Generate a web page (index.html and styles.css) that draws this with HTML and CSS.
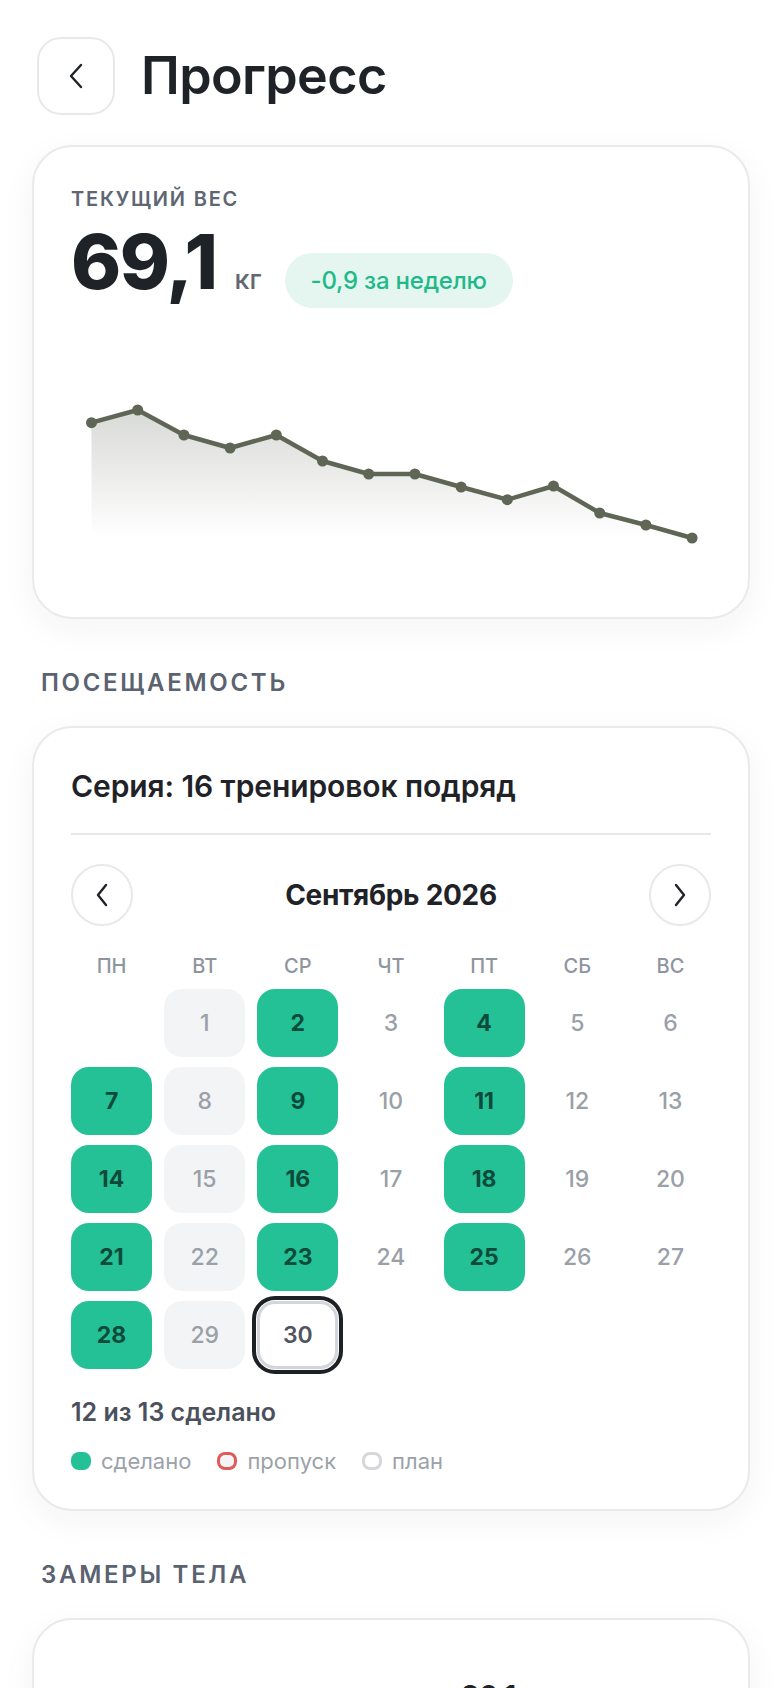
FILE: index.html
```html
<!DOCTYPE html>
<html lang="ru">
  <head>
    <meta charset="UTF-8" />
    <meta name="viewport" content="width=device-width, initial-scale=1.0" />
    <title>Прогресс</title>
    <link rel="stylesheet" href="styles.css">
  </head>
  <body>
    <div class="page">
      <header class="top-bar">
        <button class="back-btn" aria-label="Назад">
          <svg width="16" height="26" viewBox="0 0 16 26"><path d="M13 2 L3 13 L13 24" fill="none" stroke="#1f2328" stroke-width="2.4" stroke-linecap="round" stroke-linejoin="round"/></svg>
        </button>
        <h1 class="page-title">Прогресс</h1>
      </header>

      <!-- weight card -->
      <section class="card weight-card">
        <p class="card-label">Текущий вес</p>
        <div class="weight-row">
          <span class="weight-value">69,1</span>
          <span class="weight-unit">кг</span>
          <span class="weight-badge">-0,9 за неделю</span>
        </div>
        <svg class="weight-chart" width="640" height="240" viewBox="0 0 640 240">
          <defs>
            <linearGradient id="chartFill" x1="0" y1="0" x2="0" y2="1">
              <stop offset="0" stop-color="#5f6656" stop-opacity="0.24" />
              <stop offset="1" stop-color="#5f6656" stop-opacity="0" />
            </linearGradient>
          </defs>
          <polygon fill="url(#chartFill)" points="20.5,84.7 66.7,72 112.9,97 159.1,110 205.3,97 251.5,123 297.7,136 343.9,136 390.1,149 436.3,161.7 482.5,148 528.7,175 574.9,187 621.1,200 20.5,200" />
          <polyline fill="none" stroke="#5f6656" stroke-width="4.5" stroke-linejoin="round" points="20.5,84.7 66.7,72 112.9,97 159.1,110 205.3,97 251.5,123 297.7,136 343.9,136 390.1,149 436.3,161.7 482.5,148 528.7,175 574.9,187 621.1,200" />
          <g fill="#5f6656">
            <circle cx="20.5" cy="84.7" r="5.5" />
            <circle cx="66.7" cy="72" r="5.5" />
            <circle cx="112.9" cy="97" r="5.5" />
            <circle cx="159.1" cy="110" r="5.5" />
            <circle cx="205.3" cy="97" r="5.5" />
            <circle cx="251.5" cy="123" r="5.5" />
            <circle cx="297.7" cy="136" r="5.5" />
            <circle cx="343.9" cy="136" r="5.5" />
            <circle cx="390.1" cy="149" r="5.5" />
            <circle cx="436.3" cy="161.7" r="5.5" />
            <circle cx="482.5" cy="148" r="5.5" />
            <circle cx="528.7" cy="175" r="5.5" />
            <circle cx="574.9" cy="187" r="5.5" />
            <circle cx="621.1" cy="200" r="5.5" />
          </g>
        </svg>
      </section>

      <h2 class="section-title">Посещаемость</h2>

      <!-- attendance calendar -->
      <section class="card attendance-card">
        <p class="streak">Серия: 16 тренировок подряд</p>
        <div class="divider"></div>
        <div class="month-nav">
          <button class="nav-btn" aria-label="Предыдущий месяц">
            <svg width="16" height="26" viewBox="0 0 16 26"><path d="M12 3 L4 13 L12 23" fill="none" stroke="#1f2328" stroke-width="2.4" stroke-linecap="round" stroke-linejoin="round"/></svg>
          </button>
          <span class="month-name">Сентябрь 2026</span>
          <button class="nav-btn" aria-label="Следующий месяц">
            <svg width="16" height="26" viewBox="0 0 16 26"><path d="M4 3 L12 13 L4 23" fill="none" stroke="#1f2328" stroke-width="2.4" stroke-linecap="round" stroke-linejoin="round"/></svg>
          </button>
        </div>
        <div class="weekdays">
          <span>ПН</span><span>ВТ</span><span>СР</span><span>ЧТ</span><span>ПТ</span><span>СБ</span><span>ВС</span>
        </div>
        <div class="days">
          <span class="day"></span>
          <span class="day day-rest">1</span>
          <span class="day day-done">2</span>
          <span class="day">3</span>
          <span class="day day-done">4</span>
          <span class="day">5</span>
          <span class="day">6</span>

          <span class="day day-done">7</span>
          <span class="day day-rest">8</span>
          <span class="day day-done">9</span>
          <span class="day">10</span>
          <span class="day day-done">11</span>
          <span class="day">12</span>
          <span class="day">13</span>

          <span class="day day-done">14</span>
          <span class="day day-rest">15</span>
          <span class="day day-done">16</span>
          <span class="day">17</span>
          <span class="day day-done">18</span>
          <span class="day">19</span>
          <span class="day">20</span>

          <span class="day day-done">21</span>
          <span class="day day-rest">22</span>
          <span class="day day-done">23</span>
          <span class="day">24</span>
          <span class="day day-done">25</span>
          <span class="day">26</span>
          <span class="day">27</span>

          <span class="day day-done">28</span>
          <span class="day day-rest">29</span>
          <span class="day day-today">30</span>
        </div>
        <p class="done-count">12 из 13 сделано</p>
        <div class="legend">
          <span class="legend-item"><i class="legend-dot dot-done"></i>сделано</span>
          <span class="legend-item"><i class="legend-dot dot-missed"></i>пропуск</span>
          <span class="legend-item"><i class="legend-dot dot-plan"></i>план</span>
        </div>
      </section>

      <h2 class="section-title">Замеры тела</h2>

      <section class="card measure-card">
        <div class="measure-row">
          <span class="measure-name">Талия</span>
          <span class="measure-value">80,1</span>
          <span class="measure-unit">см</span>
        </div>
        <div class="measure-row">
          <span class="measure-name">Грудь</span>
          <span class="measure-value">98,4</span>
          <span class="measure-unit">см</span>
        </div>
      </section>
    </div>
  </body>
</html>
```

FILE: styles.css
```css
* {
  box-sizing: border-box;
}

body {
  margin: 0;
  background-color: #ffffff;
  font-family: Inter, "Noto Sans", sans-serif;
  color: #1f2328;
}

.page {
  padding: 37px 30px 40px 32px;
}

p,
h1,
h2 {
  margin: 0;
}

button {
  font: inherit;
  padding: 0;
  background: #fff;
  cursor: pointer;
}

.top-bar {
  display: flex;
  align-items: center;
  gap: 26px;
  padding-left: 5px;
}

.back-btn {
  width: 78px;
  height: 78px;
  border: 2px solid #e8e9ec;
  border-radius: 24px;
  display: flex;
  align-items: center;
  justify-content: center;
}

.page-title {
  font-size: 52px;
  font-weight: 600;
  letter-spacing: -0.6px;
  line-height: 60px;
}

.card {
  background-color: #fff;
  border: 2px solid #e9eaed;
  border-radius: 40px;
  padding: 40px 37px 39px;
  box-shadow: 0 10px 34px rgba(30, 35, 45, 0.05);
}

.weight-card {
  margin-top: 30px;
}

.card-label {
  font-size: 20px;
  line-height: 24px;
  font-weight: 600;
  letter-spacing: 1.8px;
  text-transform: uppercase;
  color: #5f6673;
}

.weight-row {
  display: flex;
  align-items: baseline;
  margin-top: 12px;
}

.weight-value {
  font-size: 76px;
  line-height: 76px;
  font-weight: 800;
  letter-spacing: -1.5px;
}

.weight-unit {
  font-size: 27px;
  font-weight: 500;
  color: #626873;
  margin-left: 18px;
}

.weight-badge {
  margin-left: 23px;
  height: 55px;
  line-height: 55px;
  padding: 0 26px 0 26px;
  border-radius: 28px;
  background-color: #e4f6ef;
  color: #22b98a;
  font-size: 24px;
  font-weight: 500;
  letter-spacing: -0.2px;
}

.weight-chart {
  display: block;
  margin-top: 30px;
}

.section-title {
  margin: 50px 0 29px 9px;
  font-size: 24px;
  line-height: 28px;
  font-weight: 600;
  letter-spacing: 2.7px;
  text-transform: uppercase;
  color: #5b6270;
}

.attendance-card {
  padding-bottom: 34px;
}

.streak {
  font-size: 30px;
  line-height: 36px;
  font-weight: 600;
  letter-spacing: -0.1px;
}

.divider {
  height: 2px;
  background-color: #e6e7ea;
  margin-top: 29px;
}

.month-nav {
  display: flex;
  align-items: center;
  justify-content: space-between;
  margin-top: 29px;
}

.nav-btn {
  width: 62px;
  height: 62px;
  border: 2px solid #e8e9ec;
  border-radius: 50%;
  display: flex;
  align-items: center;
  justify-content: center;
}

.month-name {
  font-size: 28px;
  font-weight: 700;
  letter-spacing: -0.3px;
}

.weekdays,
.days {
  display: grid;
  grid-template-columns: repeat(7, 1fr);
  column-gap: 12px;
}

.weekdays {
  margin-top: 28px;
  font-size: 20px;
  line-height: 24px;
  font-weight: 500;
  color: #8f959e;
  text-align: center;
}

.days {
  margin-top: 11px;
  row-gap: 10px;
}

.day {
  height: 68px;
  border-radius: 18px;
  display: flex;
  align-items: center;
  justify-content: center;
  font-size: 23px;
  font-weight: 500;
  color: #9a9fa8;
}

.day-rest {
  background-color: #f3f4f6;
}

.day-done {
  background-color: #25c196;
  color: #0e4a39;
  font-weight: 700;
}

.day-today {
  background-color: #fff;
  border: 3px solid #d3d5da;
  outline: 4px solid #1d2025;
  outline-offset: 1px;
  color: #4f5560;
  font-weight: 600;
}

.done-count {
  margin-top: 28px;
  font-size: 25px;
  line-height: 30px;
  font-weight: 600;
  color: #4b515c;
  letter-spacing: 0;
}

.legend {
  display: flex;
  gap: 26px;
  margin-top: 20px;
  font-size: 22px;
  line-height: 28px;
  color: #9ca1aa;
}

.legend-item {
  display: flex;
  align-items: center;
  gap: 10px;
}

.legend-dot {
  display: block;
  width: 20px;
  height: 18px;
  border-radius: 8px;
}

.dot-done {
  background-color: #25c196;
}

.dot-missed {
  border: 3px solid #e05a5a;
  background-color: #f3f4f6;
}

.dot-plan {
  border: 3px solid #d5d7db;
}

.measure-card {
  padding-top: 58px;
}

.measure-row {
  display: grid;
  grid-template-columns: 380px auto 1fr;
  align-items: baseline;
  gap: 10px;
  padding-bottom: 24px;
}

.measure-name {
  font-size: 24px;
  color: #8f959e;
}

.measure-value {
  font-size: 28px;
  line-height: 36px;
  font-weight: 700;
}

.measure-unit {
  font-size: 22px;
  color: #8f959e;
}
```
